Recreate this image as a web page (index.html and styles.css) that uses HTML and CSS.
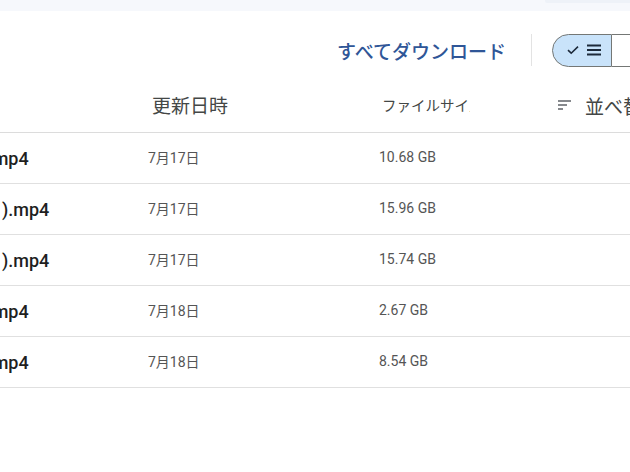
FILE: index.html
```html
<!DOCTYPE html>
<html lang="ja">
<head>
  <meta charset="UTF-8">
  <title>ファイル一覧</title>
  <link rel="stylesheet" href="styles.css">
</head>
<body>
  <div class="page">
    <div class="topbar">
      <div class="search-edge"></div>
    </div>

    <div class="toolbar">
      <button class="download-all">すべてダウンロード</button>
      <span class="divider"></span>
      <div class="view-toggle">
        <button class="seg active">
          <svg width="12" height="10" viewBox="0 0 12 10"><path d="M1 5.2 L4.2 8.2 L11 1.6" fill="none" stroke="#1d2a3a" stroke-width="1.6"/></svg>
          <svg width="14" height="12" viewBox="0 0 14 12"><path d="M0 1.5 H14 M0 6 H14 M0 10.5 H14" stroke="#1d2a3a" stroke-width="2"/></svg>
        </button>
        <button class="seg"></button>
      </div>
    </div>

    <div class="files">
      <div class="row head">
        <div class="cell name"></div>
        <div class="cell date">更新日時</div>
        <div class="cell size">ファイルサイズ</div>
        <div class="cell sort">
          <svg width="14" height="10" viewBox="0 0 14 10"><path d="M0 1 H13 M0 5 H9 M0 9 H5" stroke="#5f6368" stroke-width="1.6"/></svg>
          <span>並べ替え</span>
        </div>
      </div>

      <div class="row">
        <div class="cell name">画面録画 2024-07-17 10-21-45.mp4</div>
        <div class="cell date">7月17日</div>
        <div class="cell size">10.68 GB</div>
        <div class="cell sort"></div>
      </div>
      <div class="row">
        <div class="cell name">画面録画 2024-07-17 10-21-4_(1).mp4</div>
        <div class="cell date">7月17日</div>
        <div class="cell size">15.96 GB</div>
        <div class="cell sort"></div>
      </div>
      <div class="row">
        <div class="cell name">画面録画 2024-07-17 11-48-0_(1).mp4</div>
        <div class="cell date">7月17日</div>
        <div class="cell size">15.74 GB</div>
        <div class="cell sort"></div>
      </div>
      <div class="row">
        <div class="cell name">画面録画 2024-07-18 09-12-30.mp4</div>
        <div class="cell date">7月18日</div>
        <div class="cell size">2.67 GB</div>
        <div class="cell sort"></div>
      </div>
      <div class="row">
        <div class="cell name">画面録画 2024-07-18 14-05-11.mp4</div>
        <div class="cell date">7月18日</div>
        <div class="cell size">8.54 GB</div>
        <div class="cell sort"></div>
      </div>
    </div>
  </div>
</body>
</html>
```

FILE: styles.css
```css
body {
  margin: 0;
  padding: 0;
  background: #FFFFFF;
  font-family: Roboto, 'Noto Sans CJK JP', sans-serif;
  overflow: hidden;
}

.page {
  width: 630px;
  height: 472px;
  overflow: hidden;
}

.topbar {
  height: 11px;
  background: #f6f8fc;
  display: flex;
  justify-content: flex-end;
}

.search-edge {
  width: 85px;
  height: 3px;
  background: #eef2f8;
  border-bottom-left-radius: 2px;
}

.toolbar {
  display: flex;
  align-items: center;
  justify-content: flex-end;
  height: 34px;
  margin-top: 22px;
}

.download-all {
  border: none;
  background: none;
  padding: 0;
  font-family: inherit;
  font-size: 19px;
  font-weight: 500;
  color: #2f5697;
  cursor: pointer;
}

.divider {
  width: 1px;
  height: 32px;
  background: #e3e3e3;
  margin: 0 20px 0 25px;
}

.view-toggle {
  display: flex;
  height: 33px;
  margin-right: -42px;
  flex-shrink: 0;
}

.seg {
  width: 60px;
  height: 33px;
  box-sizing: border-box;
  border: 1px solid #747775;
  background: #FFFFFF;
  padding: 0;
  display: flex;
  align-items: center;
  justify-content: center;
  gap: 8px;
}

.seg.active {
  background: #c9e3fa;
  border-radius: 17px 0 0 17px;
  padding-left: 4px;
}

.seg + .seg {
  border-left: none;
}

/* list is scrolled sideways, so the name column starts off screen */
.files {
  margin-left: -261px;
  margin-top: 24px;
}

.row {
  display: grid;
  grid-template-columns: 409px 231px 176px 1fr;
  align-items: center;
  height: 50px;
  border-bottom: 1px solid #e0e0e0;
}

.row.head {
  height: 28px;
  padding-bottom: 13px;
  border-bottom: 1px solid #dcdcdc;
}

.cell {
  white-space: nowrap;
  overflow: hidden;
}

.name {
  font-size: 18px;
  font-weight: 500;
  color: #1f1f1f;
  padding-bottom: 2px;
}

.date,
.size {
  font-size: 14px;
  color: #555555;
  padding-bottom: 2px;
}

.head .date {
  font-size: 19px;
  color: #444746;
  padding-left: 4px;
}

.head .size {
  font-size: 14.5px;
  color: #444746;
  padding-left: 3px;
  width: 88px;
}

.sort {
  display: flex;
  align-items: center;
  gap: 13px;
  padding-left: 3px;
  font-size: 19px;
  color: #444746;
}

.sort svg {
  flex-shrink: 0;
}
```
